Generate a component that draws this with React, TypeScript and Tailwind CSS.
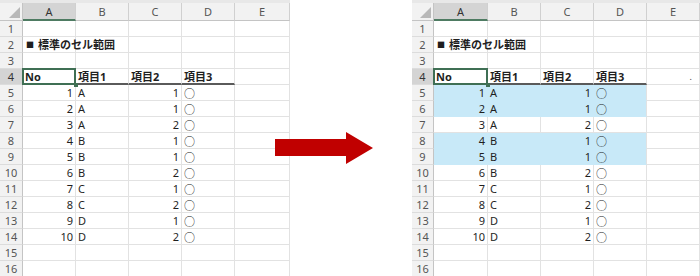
import React from "react";

type Row = { a: string; b: string; c: string; d: string };

const data: Row[] = [
  { a: "1", b: "A", c: "1", d: "○" },
  { a: "2", b: "A", c: "1", d: "○" },
  { a: "3", b: "A", c: "2", d: "○" },
  { a: "4", b: "B", c: "1", d: "○" },
  { a: "5", b: "B", c: "1", d: "○" },
  { a: "6", b: "B", c: "2", d: "○" },
  { a: "7", b: "C", c: "1", d: "○" },
  { a: "8", b: "C", c: "2", d: "○" },
  { a: "9", b: "D", c: "1", d: "○" },
  { a: "10", b: "D", c: "2", d: "○" },
];

const font = { fontFamily: '"Noto Sans", "Noto Sans CJK JP", sans-serif' };

function Cell({
  children,
  align = "left",
  hl = false,
  bold = false,
  last = false,
  underline = false,
}: {
  children?: React.ReactNode;
  align?: "left" | "right";
  hl?: boolean;
  bold?: boolean;
  last?: boolean;
  underline?: boolean;
}) {
  const bg = hl ? "bg-[#c8e9f8]" : "bg-transparent";
  const br = hl && !last ? "border-r-[#c8e9f8]" : "border-r-[#e2e2e2]";
  const bb = underline
    ? "border-b-2 border-b-[#5a5a5a]"
    : hl
    ? "border-b border-b-[#c8e9f8]"
    : "border-b border-b-[#e2e2e2]";
  return (
    <div
      className={`h-[16px] border-r ${br} ${bb} ${bg} flex items-center whitespace-nowrap text-[11px] leading-none text-[#1f1f1f] ${
        align === "right" ? "justify-end pr-[2px]" : "justify-start pl-[2px]"
      } ${bold ? "font-bold" : ""}`}
    >
      {children}
    </div>
  );
}

function RowHead({ n, active = false }: { n: number; active?: boolean }) {
  return (
    <div
      className={`h-[16px] border-b border-b-[#dcdcdc] border-r border-r-[#c4c4c4] flex items-center justify-center text-[11px] leading-none ${
        active ? "bg-[#d4d4d4] text-[#333]" : "bg-[#f2f2f2] text-[#555]"
      }`}
    >
      {n}
    </div>
  );
}

function ColHead({ label, active = false }: { label: string; active?: boolean }) {
  return (
    <div
      className={`h-[18px] border-r border-r-[#d0d0d0] flex items-center justify-center text-[11px] leading-none ${
        active
          ? "bg-[#d4d4d4] text-[#333] border-b-2 border-b-[#4e7b62]"
          : "bg-[#f2f2f2] text-[#555] border-b border-b-[#c4c4c4]"
      }`}
    >
      {label}
    </div>
  );
}

function Sheet({ highlight, cols, dot }: { highlight: number[]; cols: string; dot?: boolean }) {
  const rows: React.ReactNode[] = [];
  for (let r = 1; r <= 16; r++) {
    rows.push(<RowHead key={`h${r}`} n={r} active={r === 4} />);
    if (r === 2) {
      rows.push(
        <div key="t" className="relative z-10">
          <Cell bold>
            <span className="text-[8px] ml-[1px] mr-[4px]">■</span>標準のセル範囲
          </Cell>
        </div>
      );
      rows.push(<Cell key="b2" />, <Cell key="c2" />, <Cell key="d2" />, <Cell key="e2" />);
    } else if (r === 4) {
      rows.push(
        <div key="a4" className="relative">
          <Cell bold underline>
            No
          </Cell>
          <div className="absolute -left-[1px] -top-[1px] right-0 bottom-0 border-2 border-[#3f6f54] z-20" />
          <div className="absolute -right-[2px] -bottom-[2px] w-[4px] h-[4px] bg-[#3f6f54] z-20" />
        </div>
      );
      rows.push(
        <Cell key="b4" bold underline>
          項目1
        </Cell>,
        <Cell key="c4" bold underline>
          項目2
        </Cell>,
        <Cell key="d4" bold underline>
          項目3
        </Cell>,
        <div key="e4" className="h-[16px] border-r border-r-[#e2e2e2] border-b border-b-[#e2e2e2] flex items-center justify-end pr-[7px] text-[9px] text-[#444]">
          {dot ? "." : ""}
        </div>
      );
    } else if (r >= 5 && r <= 14) {
      const d = data[r - 5];
      const hl = highlight.includes(r);
      rows.push(
        <Cell key={`a${r}`} align="right" hl={hl}>
          {d.a}
        </Cell>,
        <Cell key={`b${r}`} hl={hl}>
          {d.b}
        </Cell>,
        <Cell key={`c${r}`} align="right" hl={hl}>
          {d.c}
        </Cell>,
        <Cell key={`d${r}`} hl={hl} last>
          <span className="text-[11px] leading-none text-[#222] translate-y-[1px]">{d.d}</span>
        </Cell>,
        <Cell key={`e${r}`} />
      );
    } else {
      rows.push(
        <Cell key={`a${r}`} />,
        <Cell key={`b${r}`} />,
        <Cell key={`c${r}`} />,
        <Cell key={`d${r}`} />,
        <Cell key={`e${r}`} />
      );
    }
  }
  return (
    <div className="flex flex-col" style={font}>
      <div className="h-[3px] bg-[#e8e8e8]" />
      <div className={`grid ${cols}`}>
        <div className="h-[18px] bg-[#f2f2f2] border-r border-r-[#c4c4c4] border-b border-b-[#c4c4c4] flex items-end justify-end p-[2px]">
          <svg width="11" height="11" viewBox="0 0 11 11">
            <polygon points="11,0 11,11 0,11" fill="#b8b8b8" />
          </svg>
        </div>
        <ColHead label="A" active />
        <ColHead label="B" />
        <ColHead label="C" />
        <ColHead label="D" />
        <ColHead label="E" />
        {rows}
      </div>
    </div>
  );
}

export default function App() {
  return (
    <div className="w-[700px] h-[276px] overflow-hidden bg-white flex">
      <div className="w-[290px] shrink-0">
        <Sheet highlight={[]} cols="grid-cols-[23px_53px_53px_53px_53px_55px]" />
      </div>
      <div className="w-[122px] shrink-0 relative">
        <svg
          className="-ml-[15px] mt-[132px] relative z-30"
          width="98"
          height="32"
          viewBox="0 0 98 32"
        >
          <polygon points="0,7 71,7 71,0 98,16 71,32 71,24 0,24" fill="#c00000" />
        </svg>
      </div>
      <div className="w-[288px] shrink-0">
        <Sheet highlight={[5, 6, 8, 9]} cols="grid-cols-[22px_54px_53px_53px_53px_53px]" dot />
      </div>
    </div>
  );
}
